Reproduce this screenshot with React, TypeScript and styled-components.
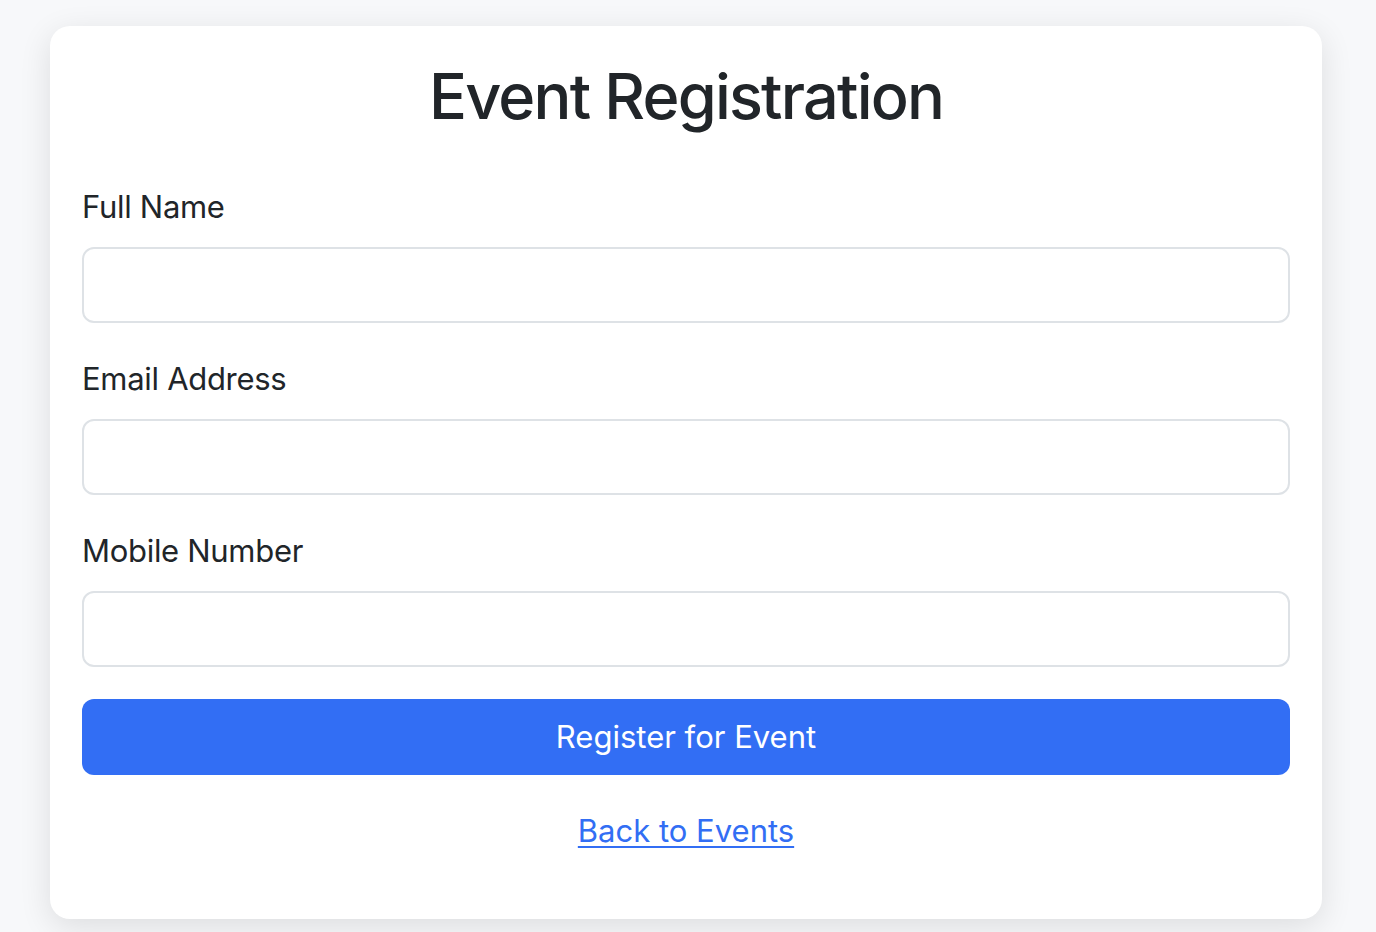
import React from 'react';
import styled, { createGlobalStyle } from 'styled-components';

const GlobalStyle = createGlobalStyle`
    * {
        box-sizing: border-box;
    }

    body {
        margin: 0;
        background-color: #f7f8fa;
        font-family: Inter, "Noto Sans", "Liberation Sans", sans-serif;
        color: #212529;
    }
`;

const Page = styled.div`
    padding: 26px 54px 14px 50px;
`;

const Card = styled.div`
    background-color: #fff;
    border-radius: 20px;
    box-shadow: 0 8px 32px rgba(0, 0, 0, 0.11);
    padding: 32px 32px 64px;
`;

const Title = styled.h2`
    margin: 0 0 48px;
    font-size: 63px;
    font-weight: 500;
    line-height: 76.8px;
    text-align: center;
    letter-spacing: -1.8px;
`;

const Field = styled.div`
    margin-bottom: 32px;
`;

const Label = styled.label`
    display: block;
    margin-bottom: 16px;
    font-size: 31px;
    line-height: 48px;
    letter-spacing: -0.3px;
`;

const Input = styled.input`
    display: block;
    width: 100%;
    height: 76px;
    padding: 12px 24px;
    border: 2px solid #dee2e6;
    border-radius: 12px;
    font-family: inherit;
    font-size: 32px;
    color: #212529;
    background-color: #fff;
    outline: none;
`;

const SubmitButton = styled.button`
    display: block;
    width: 100%;
    height: 76px;
    border: none;
    border-radius: 12px;
    background-color: #326ef4;
    color: #fff;
    font-family: inherit;
    font-size: 31px;
    cursor: pointer;
`;

const Footer = styled.p`
    margin: 32px 0 0;
    text-align: center;
    font-size: 31px;
    line-height: 48px;
`;

const BackLink = styled.a`
    color: #326ef4;
    text-decoration: underline;
    text-underline-offset: 4px;
    text-decoration-thickness: 2px;
`;

const fields = [
    { id: 'name', label: 'Full Name', type: 'text' },
    { id: 'email', label: 'Email Address', type: 'email' },
    { id: 'mobile', label: 'Mobile Number', type: 'tel' },
];

const App = () => (
    <>
        <GlobalStyle />
        <Page>
            <Card>
                <Title>Event Registration</Title>
                <form onSubmit={e => e.preventDefault()}>
                    {fields.map(field => (
                        <Field key={field.id}>
                            <Label htmlFor={field.id}>{field.label}</Label>
                            <Input id={field.id} type={field.type} />
                        </Field>
                    ))}
                    <SubmitButton type="submit">Register for Event</SubmitButton>
                </form>
                <Footer>
                    <BackLink href="#">Back to Events</BackLink>
                </Footer>
            </Card>
        </Page>
    </>
);

export default App;
